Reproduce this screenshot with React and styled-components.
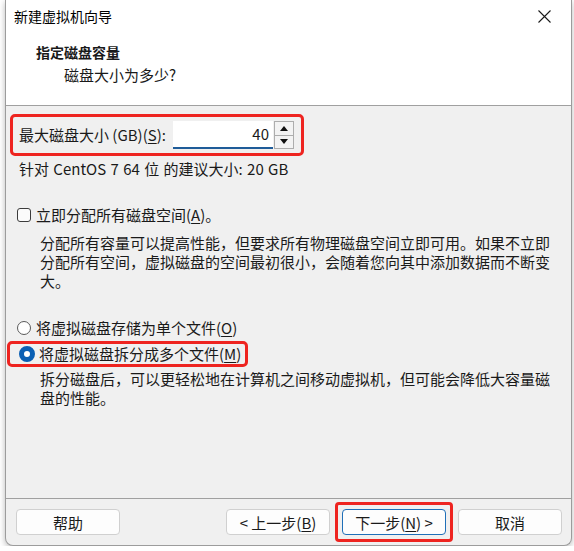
import React from 'react';
import styled, { createGlobalStyle } from 'styled-components';

const GlobalStyle = createGlobalStyle`
  html, body {
    margin: 0;
    padding: 0;
    background: #ffffff;
  }
  body {
    font-family: "Noto Sans CJK SC", "Noto Sans", sans-serif;
    color: #1a1a1a;
  }
`;

const Window = styled.div`
  margin-left: 5px;
  width: 567px;
  height: 546px;
  display: flex;
  flex-direction: column;
  background: #f0f0f0;
  border: 1px solid #9c9c9c;
  border-top: none;
  border-radius: 0 0 8px 8px;
  box-shadow: 0 2px 6px rgba(0, 0, 0, 0.28);
  overflow: hidden;
  box-sizing: border-box;
`;

const TitleBar = styled.div`
  height: 32px;
  flex: none;
  display: flex;
  align-items: center;
  justify-content: space-between;
  padding: 0 20px 0 8px;
  background: #ffffff;
  font-size: 14px;
  color: #000;
`;

const Header = styled.div`
  height: 74px;
  flex: none;
  background: #ffffff;
  border-bottom: 1px solid #a0a0a0;
  padding: 9px 0 0 30px;
  box-sizing: border-box;
`;

const HeaderTitle = styled.div`
  font-size: 14px;
  font-weight: bold;
  line-height: 22px;
`;

const HeaderSub = styled.div`
  font-size: 15px;
  line-height: 22px;
  margin-left: 28px;
  margin-top: 1px;
`;

const Body = styled.div`
  flex: 1;
  display: flex;
  flex-direction: column;
  padding-top: 8px;
  font-size: 15px;
`;

const Highlight = styled.div`
  display: flex;
  align-items: center;
  align-self: flex-start;
  border: 3px solid #ee2420;
  border-radius: 5px;
  margin-left: ${p => p.$left}px;
  margin-top: ${p => p.$top || 0}px;
  padding: ${p => p.$pad};
`;

const Label = styled.span`
  line-height: 20px;
  white-space: nowrap;
`;

const Key = styled.span`
  text-decoration: underline;
  text-underline-offset: 2px;
`;

const SpinInput = styled.div`
  display: flex;
  align-items: stretch;
  margin-left: 7px;
`;

const Field = styled.div`
  width: 100px;
  height: 28px;
  box-sizing: border-box;
  background: #ffffff;
  border-bottom: 2px solid #1f5c99;
  text-align: right;
  padding-right: 4px;
  line-height: 26px;
  font-size: 15px;
`;

const SpinButtons = styled.div`
  display: flex;
  flex-direction: column;
  margin-left: 1px;
  width: 20px;
`;

const SpinButton = styled.div`
  flex: 1;
  display: flex;
  align-items: center;
  justify-content: center;
  background: #f3f3f3;
  border: 1px solid #adadad;
  & + & {
    border-top: none;
  }
`;

const Note = styled.div`
  margin: 3px 0 0 13px;
  line-height: 20px;
  word-spacing: 1px;
`;

const OptionRow = styled.div`
  display: flex;
  align-items: center;
  gap: 5px;
  margin-left: ${p => p.$left}px;
  margin-top: ${p => p.$top || 0}px;
  line-height: 20px;
`;

const CheckBox = styled.span`
  width: 14px;
  height: 14px;
  box-sizing: border-box;
  border: 1px solid #3c3c3c;
  border-radius: 3px;
  background: #fbfbfb;
`;

const Radio = styled.span`
  width: ${p => (p.$on ? 16 : 14)}px;
  height: ${p => (p.$on ? 16 : 14)}px;
  box-sizing: border-box;
  border-radius: 50%;
  border: ${p => (p.$on ? '5px solid #0a5fb4' : '1px solid #5a5a5a')};
  background: #ffffff;
  margin-left: ${p => (p.$on ? -1 : 0)}px;
  margin-right: ${p => (p.$on ? -1 : 0)}px;
`;

const Desc = styled.p`
  margin: ${p => p.$top}px 0 0 34px;
  width: 514px;
  line-height: 19px;
  font-size: 15px;
`;

const Footer = styled.div`
  height: 47px;
  flex: none;
  border-top: 1px solid #a0a0a0;
  display: flex;
  align-items: center;
  padding: 0 9px 0 10px;
  box-sizing: border-box;
  gap: 12px;
`;

const Spacer = styled.div`
  flex: 1;
`;

const Button = styled.div`
  width: 104px;
  height: 26px;
  box-sizing: border-box;
  background: #fdfdfd;
  border: 1px solid ${p => (p.$primary ? '#1f6fb8' : '#d0d0d0')};
  border-radius: 4px;
  display: flex;
  align-items: center;
  justify-content: center;
  font-size: 15px;
`;

const ButtonMark = styled.div`
  margin: -7px;
  padding: 4px;
  border: 3px solid #ee2420;
  border-radius: 4px;
`;

const CloseIcon = () => (
  <svg width="13" height="13" viewBox="0 0 13 13">
    <path d="M0.5 0.5L12.5 12.5M12.5 0.5L0.5 12.5" stroke="#1a1a1a" strokeWidth="1.1" fill="none" />
  </svg>
);

const Arrow = ({ up }) => (
  <svg width="8" height="5" viewBox="0 0 8 5">
    <path d={up ? 'M0 5L4 0L8 5Z' : 'M0 0L4 5L8 0Z'} fill="#111" />
  </svg>
);

export default function App() {
  return (
    <>
      <GlobalStyle />
      <Window>
        <TitleBar>
          <span>新建虚拟机向导</span>
          <CloseIcon />
        </TitleBar>
        <Header>
          <HeaderTitle>指定磁盘容量</HeaderTitle>
          <HeaderSub>磁盘大小为多少?</HeaderSub>
        </Header>
        <Body>
          <Highlight $left={4} $pad="4px 7px 4px 6px">
            <Label>最大磁盘大小 (GB)(<Key>S</Key>):</Label>
            <SpinInput>
              <Field>40</Field>
              <SpinButtons>
                <SpinButton><Arrow up /></SpinButton>
                <SpinButton><Arrow /></SpinButton>
              </SpinButtons>
            </SpinInput>
          </Highlight>
          <Note>针对 CentOS 7 64 位 的建议大小: 20 GB</Note>

          <OptionRow $left={11} $top={26}>
            <CheckBox />
            <Label>立即分配所有磁盘空间(<Key>A</Key>)。</Label>
          </OptionRow>
          <Desc $top={8}>
            分配所有容量可以提高性能，但要求所有物理磁盘空间立即可用。如果不立即分配所有空间，虚拟磁盘的空间最初很小，会随着您向其中添加数据而不断变大。
          </Desc>

          <OptionRow $left={11} $top={28}>
            <Radio />
            <Label>将虚拟磁盘存储为单个文件(<Key>O</Key>)</Label>
          </OptionRow>
          <Highlight $left={1} $top={3} $pad="0 4px 0 6px">
            <OptionRow $left={4}>
              <Radio $on />
              <Label>将虚拟磁盘拆分成多个文件(<Key>M</Key>)</Label>
            </OptionRow>
          </Highlight>
          <Desc $top={2}>
            拆分磁盘后，可以更轻松地在计算机之间移动虚拟机，但可能会降低大容量磁盘的性能。
          </Desc>
        </Body>
        <Footer>
          <Button>帮助</Button>
          <Spacer />
          <Button>&lt; 上一步(<Key>B</Key>)</Button>
          <ButtonMark>
            <Button $primary>下一步(<Key>N</Key>) &gt;</Button>
          </ButtonMark>
          <Button>取消</Button>
        </Footer>
      </Window>
    </>
  );
}
